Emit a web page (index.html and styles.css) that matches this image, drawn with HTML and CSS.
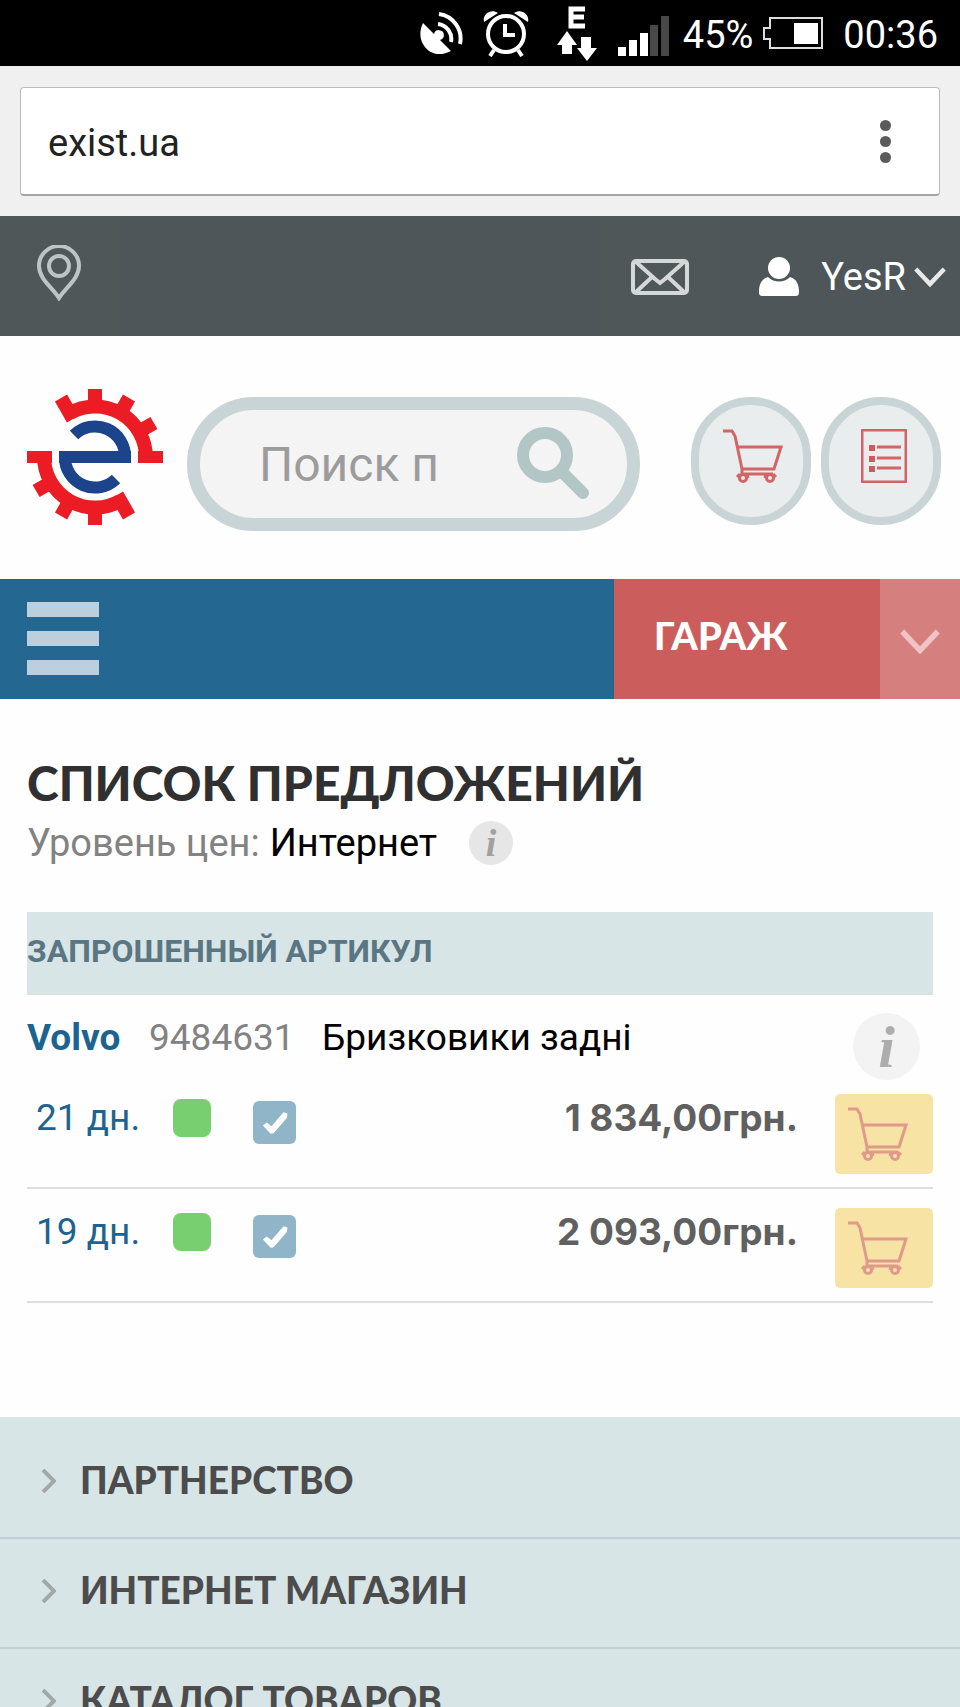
FILE: index.html
```html
<!DOCTYPE html>
<html lang="ru">
<head>
    <meta charset="UTF-8">
    <meta name="viewport" content="width=device-width, initial-scale=1.0">
    <title>exist.ua</title>
    <link rel="stylesheet" href="styles.css">
</head>
<body>

    <!-- Shared icons -->
    <svg class="sprite" aria-hidden="true">
        <symbol id="cart" viewBox="0 0 60 54">
            <path d="M0 2h9l3 5 7 33h32l7-22H14M19 40v5h31"/>
            <circle cx="20" cy="49" r="3.500"/>
            <circle cx="47" cy="49" r="3.500"/>
            <path d="M14 48l3-3M24 45l1 4M43 45l-1 4M50 45l3 3"/>
        </symbol>
        <symbol id="arrow-down" viewBox="0 0 36 22">
            <path d="M2 2l16 17L34 2"/>
        </symbol>
        <symbol id="arrow-right" viewBox="0 0 14 24">
            <path d="M1 1l11 11L1 23"/>
        </symbol>
    </svg>

    <!-- Phone status bar -->
    <div class="status">
        <svg class="status-sat" viewBox="0 0 44 44">
            <path fill="#fff" d="M3 12L14 23a5 5 0 1 1 6 6L31 40C20 46 8 43 3 33C-1 26 0 18 3 12Z"/>
            <path d="M18 13a15 15 0 0 1 13 18M19 3a25 25 0 0 1 21 30"/>
        </svg>
        <svg class="status-alarm" viewBox="0 0 48 48">
            <circle cx="24" cy="25" r="18"/>
            <path d="M23 15v11h10M12 41l-4 6M36 41l4 6"/>
            <path fill="#fff" stroke="none" d="M2 13C0 5 9-1 16 4ZM46 13C48 5 39-1 32 4Z"/>
        </svg>
        <svg class="status-data" viewBox="0 0 42 56">
            <path stroke-width="5" d="M29 4H15v17h14M15 12h13"/>
            <path fill="#fff" stroke="none" d="M11 26l10 14h-5v9H6v-9H1ZM25 32h10v11h6L31 56 21 43h4Z"/>
        </svg>
        <svg class="status-signal" viewBox="0 0 51 40">
            <path fill="#fff" d="M0 31h8v9H0ZM11 24h8v16h-8ZM22 17h8v23h-8Z"/>
            <path fill="#484848" d="M32 9h8v31h-8ZM43 0h8v40h-8Z"/>
        </svg>
        <span class="status-percent">45%</span>
        <svg class="status-battery" viewBox="0 0 60 32">
            <path fill="none" stroke="#ddd" stroke-width="2" d="M7 1h52v30H7v-9H1V11h6Z"/>
            <path fill="#fff" d="M31 6h24v21H31Z"/>
        </svg>
        <span class="status-time">00:36</span>
    </div>

    <!-- Browser address bar -->
    <div class="browser">
        <div class="address">
            <input class="address-input" type="text" value="exist.ua" aria-label="Адрес">
            <button class="address-menu" type="button" aria-label="Меню браузера">
                <i></i><i></i><i></i>
            </button>
        </div>
    </div>

    <div class="topbar">
        <a class="topbar-geo" href="#" aria-label="Город">
            <svg viewBox="0 0 44 56"><path d="M22 53C16 43 2 34 2 21a20 20 0 0 1 40 0C42 34 28 43 22 53Z"/><circle cx="22" cy="21" r="10"/></svg>
        </a>
        <a class="topbar-mail" href="#" aria-label="Сообщения">
            <svg viewBox="0 0 58 36"><rect x="2" y="2" width="54" height="32" rx="3"/><path d="M5 3l19 17 5 4 5-4L53 3M5 33l16-15M53 33L37 18"/></svg>
        </a>
        <button class="topbar-user" type="button">
            <svg class="user-icon" viewBox="0 0 40 40"><circle cx="20" cy="11" r="11"/><path d="M9 20c6 6 16 6 22 0 7 2 9 8 9 15 0 3-1 4-4 4H4c-3 0-4-1-4-4 0-7 2-13 9-15Z"/></svg>
            <span>YesR</span>
            <svg class="user-arrow"><use href="#arrow-down"/></svg>
        </button>
    </div>

    <header class="header">
        <a class="logo" href="#" aria-label="exist">
            <svg viewBox="-68 -68 136 136">
                <defs>
                    <g id="gear">
                        <path class="gear-ring" d="M-25 -44A51 51 0 0 1 51 0"/>
                        <rect x="43" y="-6" width="25" height="12"/>
                        <rect x="50" y="-7" width="18" height="14" transform="rotate(-30)"/>
                        <rect x="50" y="-7" width="18" height="14" transform="rotate(-60)"/>
                        <rect x="50" y="-7" width="18" height="14" transform="rotate(-90)"/>
                        <rect x="44" y="-7" width="24" height="14" transform="rotate(-120)"/>
                        <path class="gear-e" d="M-21 -22A30 30 0 0 1 30 0"/>
                    </g>
                </defs>
                <use href="#gear"/>
                <use href="#gear" transform="rotate(180)"/>
                <rect class="gear-bar" x="-36" y="-6" width="72" height="12"/>
            </svg>
        </a>
        <form class="search">
            <input class="search-input" type="text" placeholder="Поиск п" aria-label="Поиск">
            <button class="search-btn" type="button" aria-label="Найти">
                <svg viewBox="0 0 74 74"><circle cx="28" cy="28" r="22"/><path d="M46 46l20 20"/></svg>
            </button>
        </form>
        <div class="header-links">
            <a class="round" href="#" aria-label="Корзина">
                <svg class="round-cart"><use href="#cart"/></svg>
            </a>
            <a class="round" href="#" aria-label="Заказы">
                <svg class="round-list" viewBox="0 0 46 54">
                    <path d="M1 1h44v52H1ZM16 18h24M16 29h24M16 39h24"/>
                    <path class="round-dots" d="M8 16h6v6H8ZM8 27h6v6H8ZM8 37h6v6H8Z"/>
                </svg>
            </a>
        </div>
    </header>

    <nav class="nav">
        <button class="burger" type="button" aria-label="Меню"><i></i><i></i><i></i></button>
        <button class="garage" type="button">ГАРАЖ</button>
        <button class="garage-arrow" type="button" aria-label="Открыть гараж">
            <svg><use href="#arrow-down"/></svg>
        </button>
    </nav>

    <main class="main">
        <h1>СПИСОК ПРЕДЛОЖЕНИЙ</h1>
        <p class="level">Уровень цен: <b>Интернет</b> <button class="info info-small" type="button">i</button></p>

        <table class="offers">
            <tr>
                <th colspan="5">ЗАПРОШЕННЫЙ АРТИКУЛ</th>
            </tr>
            <tr>
                <td colspan="5">
                    <div class="part">
                        <a class="part-brand" href="#">Volvo</a>
                        <span class="part-code">9484631</span>
                        <span class="part-name">Бризковики задні</span>
                        <button class="info info-big" type="button">i</button>
                    </div>
                </td>
            </tr>
            <tr class="offer">
                <td class="days"><a href="#">21 дн.</a></td>
                <td class="stock"><span></span></td>
                <td class="check"><input type="checkbox" aria-label="Выбрать, 21 дн." checked></td>
                <td class="price">1 834,00грн.</td>
                <td class="buy"><button type="button" aria-label="В корзину"><svg><use href="#cart"/></svg></button></td>
            </tr>
            <tr class="offer">
                <td class="days"><a href="#">19 дн.</a></td>
                <td class="stock"><span></span></td>
                <td class="check"><input type="checkbox" aria-label="Выбрать, 19 дн." checked></td>
                <td class="price">2 093,00грн.</td>
                <td class="buy"><button type="button" aria-label="В корзину"><svg><use href="#cart"/></svg></button></td>
            </tr>
        </table>
    </main>

    <footer class="footer">
        <a href="#"><svg><use href="#arrow-right"/></svg>ПАРТНЕРСТВО</a>
        <a href="#"><svg><use href="#arrow-right"/></svg>ИНТЕРНЕТ МАГАЗИН</a>
        <a href="#"><svg><use href="#arrow-right"/></svg>КАТАЛОГ ТОВАРОВ</a>
    </footer>

</body>
</html>
```

FILE: styles.css
```css
* {
    box-sizing: border-box;
}

body {
    margin: 0;
    height: 100vh;
    overflow: hidden;
    background: #fefefe;
    color: #000;
    font-family: Roboto, "Liberation Sans", sans-serif;
    font-size: 37px;
}

button,
input {
    margin: 0;
    padding: 0;
    border: none;
    background: none;
    font-family: inherit;
    font-size: inherit;
    color: inherit;
}

button {
    cursor: pointer;
}

a {
    text-decoration: none;
}

svg {
    display: block;
    flex: none;
    fill: none;
}

.sprite {
    position: absolute;
    width: 0;
    height: 0;
}

/* Status bar */
.status {
    display: flex;
    align-items: center;
    justify-content: flex-end;
    height: 66px;
    padding-right: 22px;
    background: #000;
    color: #fff;
    font-size: 38px;
}

.status svg {
    stroke-width: 4;
}

.status-sat {
    width: 44px;
    height: 44px;
    margin-right: 18px;
}

.status-sat path + path,
.status-alarm,
.status-data {
    stroke: #fff;
}

.status-alarm {
    width: 48px;
    height: 48px;
    margin-right: 26px;
}

.status-data {
    width: 42px;
    height: 56px;
    margin-right: 20px;
}

.status-signal {
    width: 51px;
    height: 40px;
    margin-top: 5px;
    margin-right: 14px;
}

.status-percent {
    margin-top: 4px;
    margin-right: 10px;
}

.status-battery {
    width: 60px;
    height: 32px;
    margin-right: 20px;
}

.status-time {
    margin-top: 4px;
}

/* Address bar */
.browser {
    padding: 21px 20px 20px;
    background: #f0f0f0;
}

.address {
    display: flex;
    align-items: center;
    height: 109px;
    padding: 0 48px 0 27px;
    border: 1px solid #bbb;
    border-bottom: 2px solid #a5a5a5;
    border-radius: 4px;
    background: #fff;
}

.address-input {
    flex: 1;
    min-width: 0;
    padding-top: 4px;
    color: #222;
    font-size: 38px;
}

.address-menu {
    display: grid;
    gap: 5px;
}

.address-menu i {
    width: 11px;
    height: 11px;
    border-radius: 50%;
    background: #5a5a5a;
}

/* Dark bar */
.topbar {
    display: flex;
    height: 120px;
    background: #4e5659;
    color: #fff;
    font-size: 38px;
}

.topbar-geo,
.topbar-mail {
    width: 120px;
    background: #505759;
    stroke: #bec4c5;
    stroke-width: 4;
}

.topbar-geo {
    padding: 29px 37px;
}

.topbar-geo svg {
    width: 44px;
    height: 56px;
}

.topbar-mail {
    margin-left: auto;
    padding: 43px 32px;
    stroke: #d5d8d8;
}

.topbar-mail svg {
    width: 58px;
    height: 36px;
}

.topbar-user {
    display: flex;
    align-items: center;
    padding: 2px 14px 0 40px;
}

.user-icon {
    width: 40px;
    height: 40px;
    margin-right: 22px;
    fill: #fff;
}

.user-arrow {
    width: 32px;
    height: 20px;
    margin-left: 8px;
    stroke: #e8eaea;
    stroke-width: 5;
}

/* Logo and search */
.header {
    display: flex;
    align-items: flex-start;
    padding: 61px 19px 48px 27px;
}

.logo {
    margin: -8px 24px 0 0;
}

.logo svg {
    width: 136px;
    height: 136px;
    fill: #ec1c24;
}

.gear-ring,
.gear-e {
    fill: none;
    stroke: #ec1c24;
    stroke-width: 14;
}

.gear-e {
    stroke: #1c448c;
    stroke-width: 12;
}

.gear-bar {
    fill: #1c448c;
}

.search {
    display: flex;
    align-items: center;
    flex: 1;
    min-width: 0;
    height: 134px;
    padding: 0 36px 0 59px;
    border: 13px solid #c8d4d5;
    border-radius: 67px;
    background: #f4f4f4;
}

.search-input {
    flex: 1;
    min-width: 0;
    font-size: 48px;
}

.search-input::placeholder {
    color: #9c9c9c;
    opacity: 1;
}

.search-btn svg {
    width: 74px;
    height: 74px;
    stroke: #b1c6c5;
    stroke-width: 12;
    stroke-linecap: round;
}

.header-links {
    display: flex;
    gap: 10px;
    margin-left: 51px;
}

.round {
    width: 120px;
    height: 128px;
    padding-top: 24px;
    border: 8px solid #c8d4d5;
    border-radius: 60px;
    background: #e9edee;
    stroke: #d26565;
    stroke-width: 3;
}

.round-cart {
    width: 60px;
    height: 54px;
    margin-left: 24px;
}

.round-list {
    width: 46px;
    height: 54px;
    margin-left: 32px;
}

.round-dots {
    fill: #cf5a5a;
    stroke: none;
}

/* Navigation */
.nav {
    display: flex;
    height: 120px;
    background: #246790;
}

.burger {
    display: grid;
    align-content: start;
    gap: 14px;
    padding: 23px 27px;
    margin-right: auto;
}

.burger i {
    width: 72px;
    height: 15px;
    background: #bbd0dc;
}

.garage {
    width: 266px;
    padding: 0 40px 8px;
    background: #cb5d5d;
    color: #fff;
    font-family: Lato, sans-serif;
    font-size: 38px;
    font-weight: 900;
    text-align: left;
}

.garage-arrow {
    width: 80px;
    padding: 4px 20px 0;
    background: #d57f7f;
}

.garage-arrow svg {
    width: 40px;
    height: 25px;
    stroke: #f0c4c4;
    stroke-width: 5;
}

/* Offers */
.main {
    padding: 54px 27px 114px;
}

h1 {
    margin: 0;
    color: #303030;
    font-family: Lato, sans-serif;
    font-size: 48px;
    font-weight: 900;
    line-height: 60px;
}

.level {
    display: flex;
    align-items: center;
    gap: 10px;
    margin: 8px 0 47px;
    color: #828282;
    font-size: 38px;
    line-height: 44px;
}

.level b {
    color: #000;
    font-weight: 400;
}

.info {
    border-radius: 50%;
    background: #f3f3f3;
    color: #adadad;
    font-family: "Liberation Serif", serif;
    font-style: italic;
    font-weight: 700;
}

.info-small {
    width: 44px;
    height: 44px;
    margin-left: 22px;
    background: #e6e6e6;
    color: #a0a0a0;
    line-height: 44px;
}

.info-big {
    width: 67px;
    height: 67px;
    margin-left: auto;
    font-size: 60px;
    line-height: 60px;
}

.offers {
    width: 100%;
    border-collapse: collapse;
}

.offers th {
    padding: 19px 0 23px;
    border-bottom: 1px solid #ddd;
    background: #d8e5e6;
    color: #5b7683;
    font-size: 32px;
    line-height: 40px;
    text-align: left;
}

.offers td {
    padding: 0;
    vertical-align: top;
}

.part {
    display: flex;
    padding: 18px 13px 0 0;
    line-height: 50px;
}

.part-brand {
    width: 122px;
    color: #1c648f;
    font-weight: 700;
}

.part-code {
    width: 173px;
    color: #828282;
}

.offer {
    border-bottom: 2px solid #dedede;
    line-height: 48px;
}

.offer td {
    padding: 19px 0 13px;
}

/* The info button above already gives the first offer some air */
.offer:nth-child(3) td {
    padding-top: 14px;
}

.offer .days {
    width: 146px;
    padding-left: 9px;
}

.days a {
    color: #1c648f;
}

.stock,
.check {
    width: 80px;
}

.stock span {
    display: block;
    width: 38px;
    height: 38px;
    margin-top: 5px;
    border-radius: 8px;
    background: #78cf70;
}

.check input {
    display: block;
    width: 43px;
    height: 43px;
    margin-top: 7px;
    border-radius: 6px;
    background: #90b5c8;
    appearance: none;
}

.check input:checked::before {
    content: "";
    display: block;
    height: 43px;
    background: #fff;
    clip-path: polygon(23% 57%, 32% 50%, 43% 59%, 71% 26%, 80% 29%, 79% 39%, 48% 75%, 41% 76%);
}

.price {
    color: #606060;
    font-family: Inter, sans-serif;
    font-weight: 700;
    text-align: right;
}

.buy {
    width: 135px;
}

.buy button {
    display: block;
    width: 98px;
    height: 80px;
    margin-left: auto;
    padding: 12px 13px;
    border-radius: 5px;
    background: #f7e3a4;
}

.buy svg {
    width: 60px;
    height: 54px;
    stroke: #e09a8c;
    stroke-width: 3;
}

/* Footer menu */
.footer {
    padding-top: 12px;
    background: #d8e5e6;
}

.footer a {
    display: flex;
    align-items: center;
    gap: 24px;
    padding: 28px 42px 34px;
    border-bottom: 2px solid #c0ced5;
    color: #4c4c4c;
    font-family: Lato, sans-serif;
    font-weight: 900;
    line-height: 46px;
}

.footer svg {
    width: 14px;
    height: 24px;
    margin-top: 2px;
    stroke: #a0a8a8;
    stroke-width: 4;
}
```
